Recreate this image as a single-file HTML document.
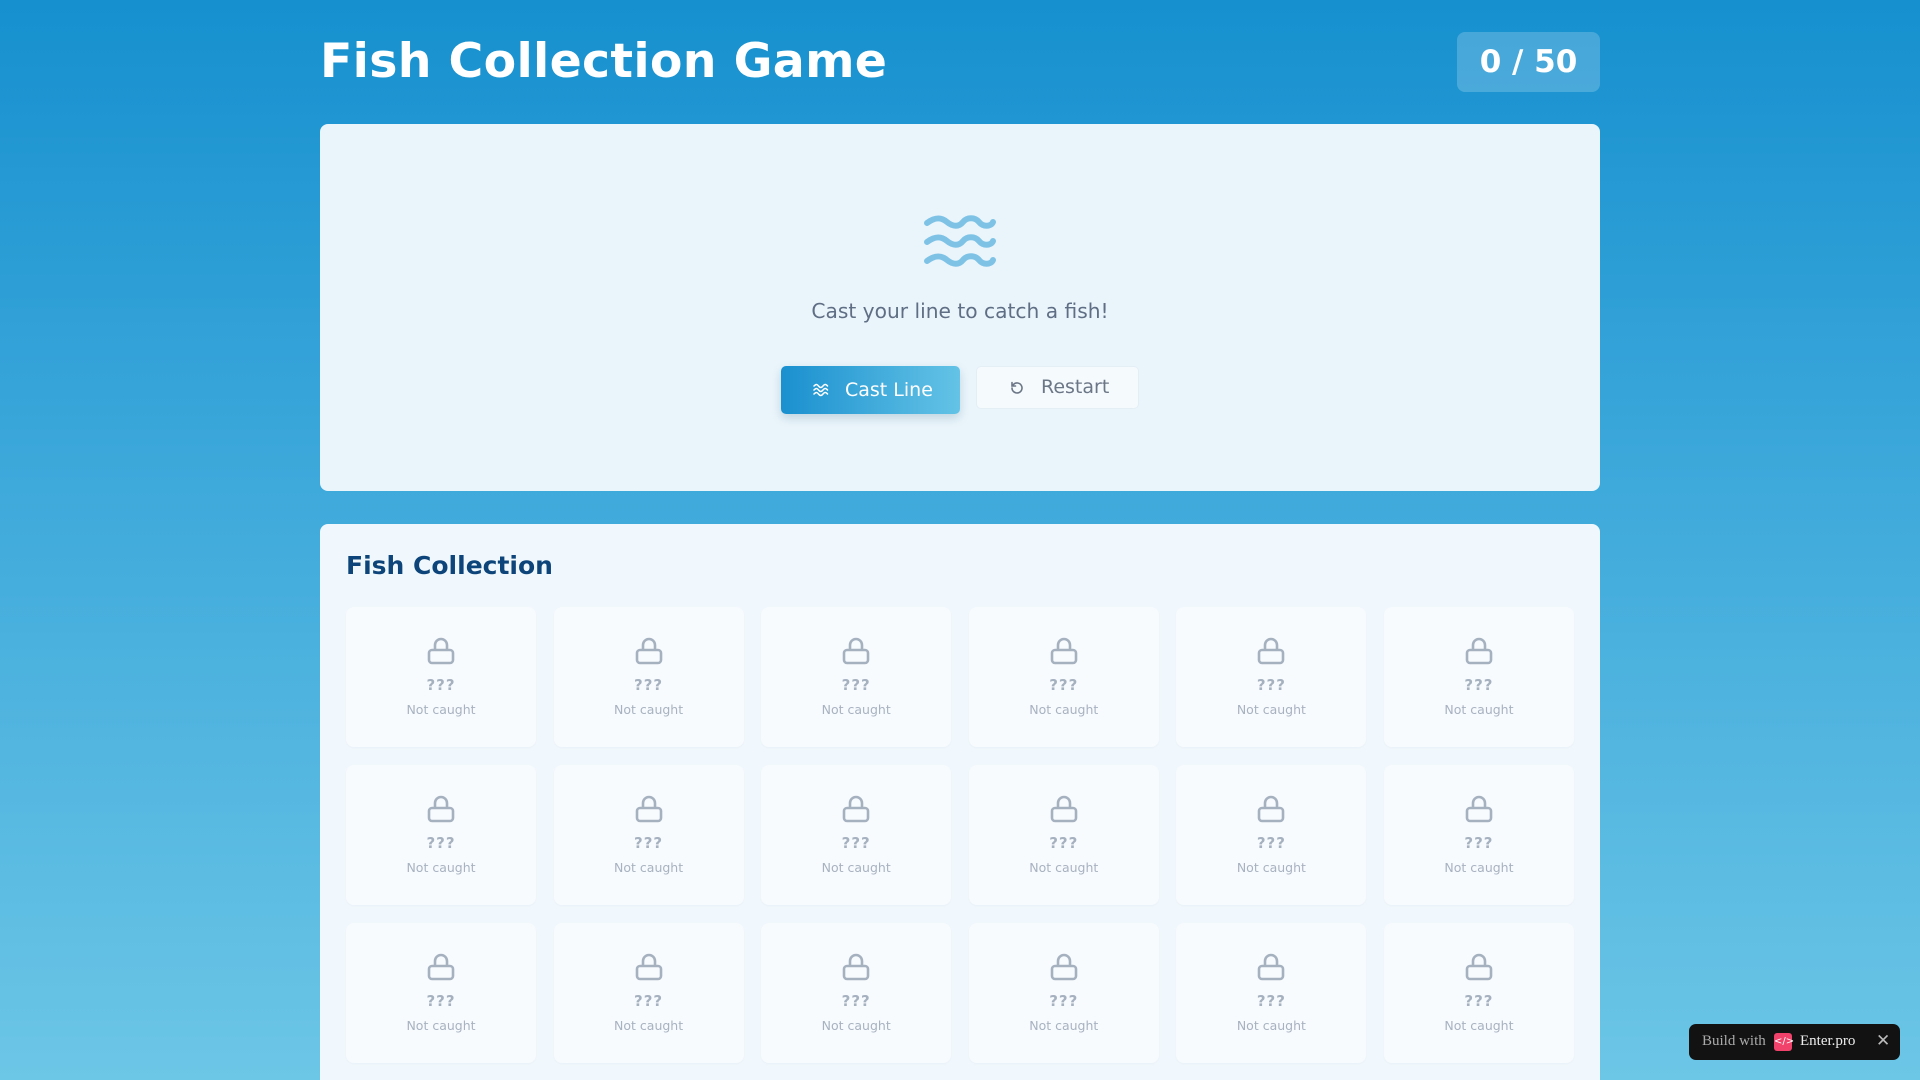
<!DOCTYPE html>
<html style="width:1920px;height:1080px;overflow:hidden;background:#1690cf"><head><meta charset="utf-8"><style>
*{box-sizing:border-box;margin:0;padding:0}
body{width:1920px;height:1080px;overflow:hidden;font-family:"DejaVu Sans","Liberation Sans",sans-serif;background:linear-gradient(180deg,#1690cf 0%,#3ea9db 45%,#6cc6e6 100%);position:relative}
.wrap{position:absolute;left:320px;width:1280px;top:0;height:1080px}
h1{position:absolute;left:0;top:34px;font-size:47.4px;font-weight:bold;color:#fff;letter-spacing:0.3px}
.badge{position:absolute;right:0;top:32px;width:143px;height:60px;border-radius:8px;background:rgba(255,255,255,0.2);color:#fff;font-weight:bold;font-size:31px;text-align:center;line-height:60px}
.p1{position:absolute;left:0;top:124px;width:1280px;height:367px;background:#eaf5fb;border-radius:8px}
.waves{position:absolute;left:923px;top:213px}
.msg{position:absolute;left:0;width:1280px;top:175px;text-align:center;font-size:20.2px;color:#5f6e84}
.cast{position:absolute;left:461px;top:242px;width:179px;height:48px;border-radius:5px;background:linear-gradient(90deg,#1a90cf,#64c3e6);color:#fff;font-size:19px;line-height:48px;box-shadow:0 4px 10px rgba(0,60,100,.18)}
.cast span{position:absolute;left:64px}
.rest{position:absolute;left:656px;top:242px;width:163px;height:43px;border-radius:5px;background:#f5fafd;border:1px solid #e3eef5;color:#6b7686;font-size:19px;line-height:41px}
.rest span{position:absolute;left:64px}
.p2{position:absolute;left:0;top:524px;width:1280px;height:556px;background:#f0f8fd;border-radius:8px 8px 0 0}
.p2 h2{position:absolute;left:26px;top:27px;font-size:25px;color:#0d457a;font-weight:bold}
.grid{position:absolute;left:26px;top:83px;display:grid;grid-template-columns:repeat(6,190px);column-gap:17.6px;row-gap:18px}
.card{height:140px;background:#f7fbfe;border-radius:8px;position:relative;text-align:center;box-shadow:0 1px 2px rgba(0,40,80,.03)}
.card svg{position:absolute;left:81px;top:29px}
.q{position:absolute;top:69px;width:100%;font-weight:bold;font-size:15px;color:#a6b1c0;letter-spacing:1px}
.nc{position:absolute;top:95px;width:100%;font-size:12.5px;color:#a8b2c0}
.tag{position:absolute;left:1689px;top:1024px;width:211px;height:36px;background:#121212;border-radius:7px;font-family:"Liberation Serif",serif;font-size:15px;color:#aaa}
</style></head><body>
<div class="wrap">
<h1>Fish Collection Game</h1>
<div class="badge">0 / 50</div>
<div class="p1">
<div class="msg">Cast your line to catch a fish!</div>
<div class="cast"><svg style="position:absolute;left:32px;top:17px" width="16" height="14" viewBox="0 0 16 14" fill="none" stroke="#fff" stroke-width="1.5" stroke-linecap="round"><path d="M1 3c2-2 3-2 4.5 0s3 2 4.5 0 3-2 4.5 0M1 7c2-2 3-2 4.5 0s3 2 4.5 0 3-2 4.5 0M1 11c2-2 3-2 4.5 0s3 2 4.5 0 3-2 4.5 0"/></svg><span>Cast Line</span></div>
<div class="rest"><svg style="position:absolute;left:32px;top:13px" width="16" height="16" viewBox="0 0 16 16" fill="none" stroke="#6b7686" stroke-width="1.6" stroke-linecap="round"><path d="M3 8a5 5 0 1 0 1.5-3.6L3 6M3 2.5V6h3.5"/></svg><span>Restart</span></div>
</div>
<div class="p2"><h2>Fish Collection</h2>
<div class="grid" id="g"></div></div>
</div>
<svg class="waves" width="74" height="58" viewBox="0 0 74 58" fill="none" stroke="#7ec3e6" stroke-width="6" stroke-linecap="round"><path d="M4 10c8-6 14-6 20 -1s12 5 16 0 12-5 16 0 12 5 14 0"/><path d="M4 29c8-6 14-6 20-1s12 5 16 0 12-5 16 0 12 5 14 0"/><path d="M4 48c8-6 14-6 20-1s12 5 16 0 12-5 16 0 12 5 14 0"/></svg>
<div class="tag"><span style="position:absolute;left:13px;top:9px">Build with</span><span style="position:absolute;left:85px;top:9px;width:18px;height:18px;background:#f0426a;border-radius:3px;color:#fff;font-size:10px;text-align:center;line-height:18px;font-family:'DejaVu Sans'">&lt;/&gt;</span><span style="position:absolute;left:111px;top:9px;color:#eee">Enter.pro</span><span style="position:absolute;left:187px;top:7px;color:#bbb;font-size:17px">✕</span></div>
<script>
var h='';for(var i=0;i<18;i++)h+='<div class="card"><svg width="28" height="30" viewBox="0 0 28 30" fill="none" stroke="#a6b1c0" stroke-width="2.6"><path d="M8 14V9a6 6 0 0 1 12 0v5"/><rect x="2" y="14" width="24" height="13" rx="3"/></svg><div class="q">???</div><div class="nc">Not caught</div></div>';document.getElementById('g').innerHTML=h;
</script>
</body></html>
